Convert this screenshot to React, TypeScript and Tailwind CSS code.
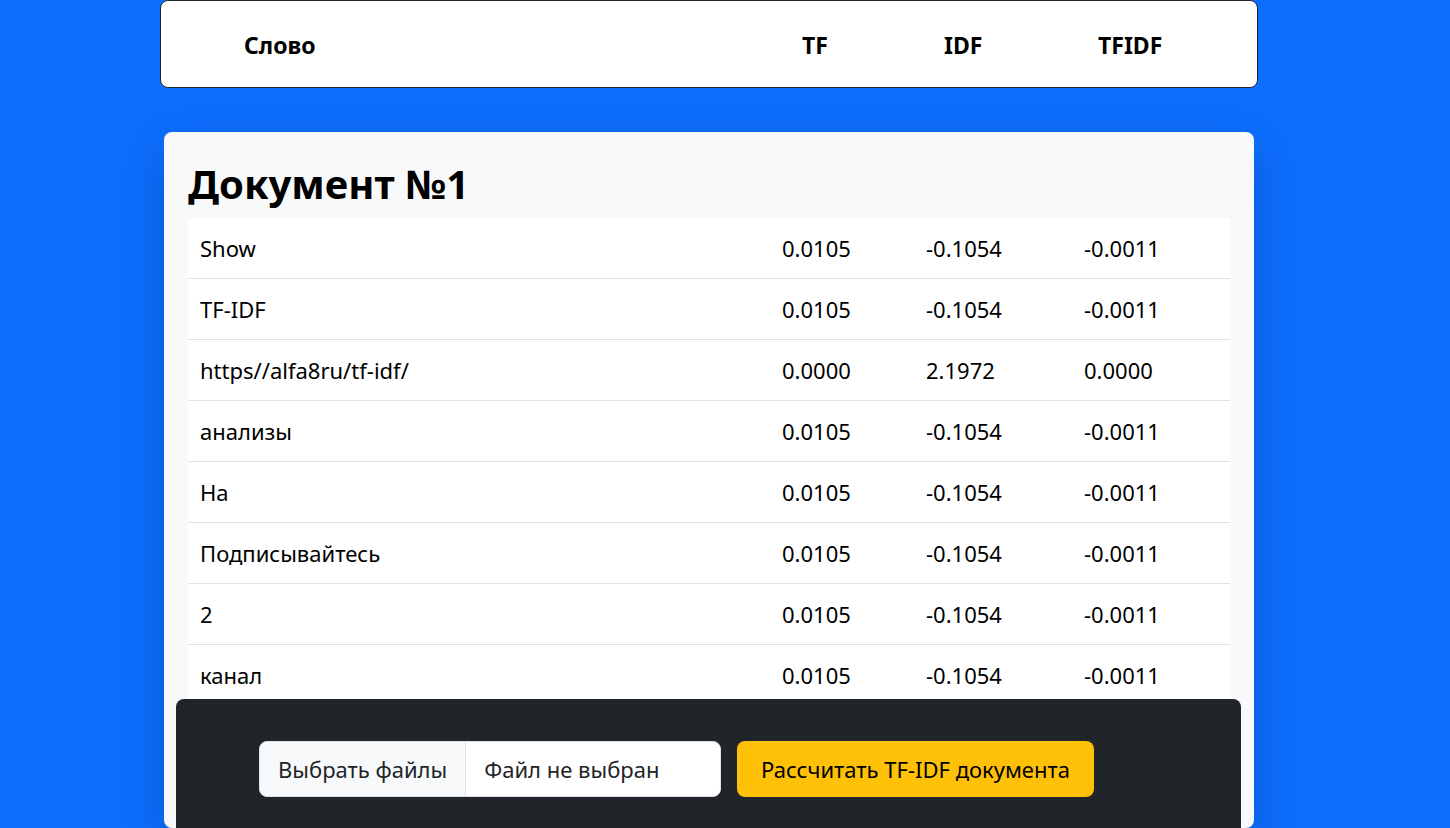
const rows = [
  { word: "Show", tf: "0.0105", idf: "-0.1054", tfidf: "-0.0011" },
  { word: "TF-IDF", tf: "0.0105", idf: "-0.1054", tfidf: "-0.0011" },
  { word: "https//alfa8ru/tf-idf/", tf: "0.0000", idf: "2.1972", tfidf: "0.0000" },
  { word: "анализы", tf: "0.0105", idf: "-0.1054", tfidf: "-0.0011" },
  { word: "На", tf: "0.0105", idf: "-0.1054", tfidf: "-0.0011" },
  { word: "Подписывайтесь", tf: "0.0105", idf: "-0.1054", tfidf: "-0.0011" },
  { word: "2", tf: "0.0105", idf: "-0.1054", tfidf: "-0.0011" },
  { word: "канал", tf: "0.0105", idf: "-0.1054", tfidf: "-0.0011" },
  { word: "видео", tf: "0.0105", idf: "-0.1054", tfidf: "-0.0011" },
  { word: "TF", tf: "0.0105", idf: "-0.1054", tfidf: "-0.0011" },
];

const font = "font-['Noto_Sans','Open_Sans',sans-serif]";

export default function App() {
  return (
    <div className={`h-screen overflow-hidden bg-[#0d6efd] text-black ${font}`}>
      {/* Table header */}
      <div className="ml-[160px] w-[1098px] h-[88px] bg-white border border-[#212529] rounded-lg grid grid-cols-[641px_142px_154px_1fr] items-center text-[23px] font-bold pt-[2px]">
        <div className="pl-[83px]">Слово</div>
        <div>TF</div>
        <div>IDF</div>
        <div>TFIDF</div>
      </div>

      {/* Document card */}
      <div className="ml-[164px] mt-[44px] w-[1090px] bg-[#f8f9fa] rounded-lg shadow-[0_1rem_3rem_rgba(0,0,0,0.175)] px-6 pt-6">
        <h1 className="h-[62px] flex items-center text-[40px] font-bold leading-none pb-[6px]">Документ №1</h1>
        <div className="bg-white">
          {rows.map((r, i) => (
            <div
              key={i}
              className="h-[61px] grid grid-cols-[582px_144px_158px_1fr] items-center border-b border-[#dee2e6] text-[22px] px-3 pt-[1px]"
            >
              <div>{r.word}</div>
              <div>{r.tf}</div>
              <div>{r.idf}</div>
              <div>{r.tfidf}</div>
            </div>
          ))}
        </div>
      </div>

      {/* Bottom bar */}
      <div className="fixed left-[176px] bottom-0 w-[1065px] h-[129px] bg-[#212529] rounded-t-lg pt-[42px] pl-[83px]">
        <div className="flex gap-4 text-[22px]">
          <div className="flex h-[56px] w-[462px] rounded-lg border border-[#dee2e6] overflow-hidden bg-white">
            <div className="px-[18px] flex items-center bg-[#f8f9fa] border-r border-[#dee2e6] text-[#212529]">
              Выбрать файлы
            </div>
            <div className="px-[18px] flex items-center text-[#212529]">Файл не выбран</div>
          </div>
          <button className="h-[56px] px-[24px] rounded-lg bg-[#ffc107] text-black">
            Рассчитать TF-IDF документа
          </button>
        </div>
      </div>
    </div>
  );
}
